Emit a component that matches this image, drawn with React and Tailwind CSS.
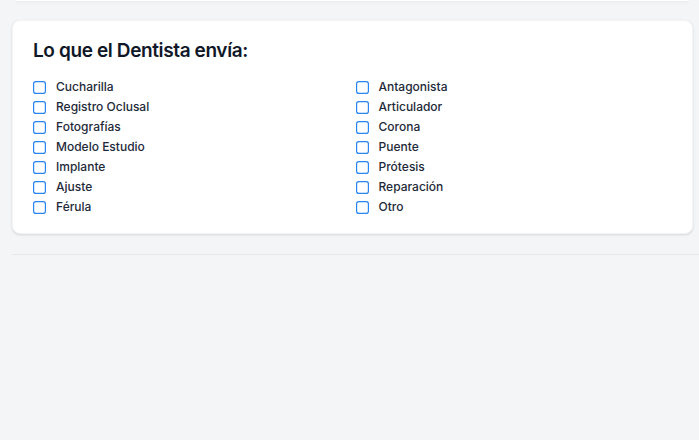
const left = ["Cucharilla", "Registro Oclusal", "Fotografías", "Modelo Estudio", "Implante", "Ajuste", "Férula"];
const right = ["Antagonista", "Articulador", "Corona", "Puente", "Prótesis", "Reparación", "Otro"];

function Box() {
  return (
    <svg width="13" height="13" viewBox="0 0 13 13" className="shrink-0">
      <rect x="0.6" y="0.6" width="11.8" height="11.8" rx="2.2" fill="#ffffff" stroke="#2a85f0" strokeWidth="1.2" />
    </svg>
  );
}

function Item({ label }) {
  return (
    <label className="flex items-center gap-[10px] h-5 text-xs font-medium text-gray-800">
      <Box />
      <span>{label}</span>
    </label>
  );
}

export default function App() {
  return (
    <div className="w-full min-h-screen bg-[#f4f5f7] font-['Inter',sans-serif]">
      {/* bottom edge of the card above */}
      <div className="ml-4 mr-[10px] h-px bg-white shadow-sm rounded-b-lg"></div>

      {/* Card */}
      <div className="mt-[19px] ml-3 mr-[6px] bg-white rounded-lg border border-gray-100 shadow-sm px-5 pt-4 pb-4">
        <h2 className="text-[19px] leading-7 tracking-[-0.02em] font-semibold text-gray-900 mb-3">Lo que el Dentista envía:</h2>
        <div className="grid grid-cols-2 gap-x-1.5">
          <div className="flex flex-col">
            {left.map((l) => (
              <Item key={l} label={l} />
            ))}
          </div>
          <div className="flex flex-col">
            {right.map((l) => (
              <Item key={l} label={l} />
            ))}
          </div>
        </div>
      </div>

      <div className="mt-5 ml-3 border-t border-gray-200"></div>
    </div>
  );
}
